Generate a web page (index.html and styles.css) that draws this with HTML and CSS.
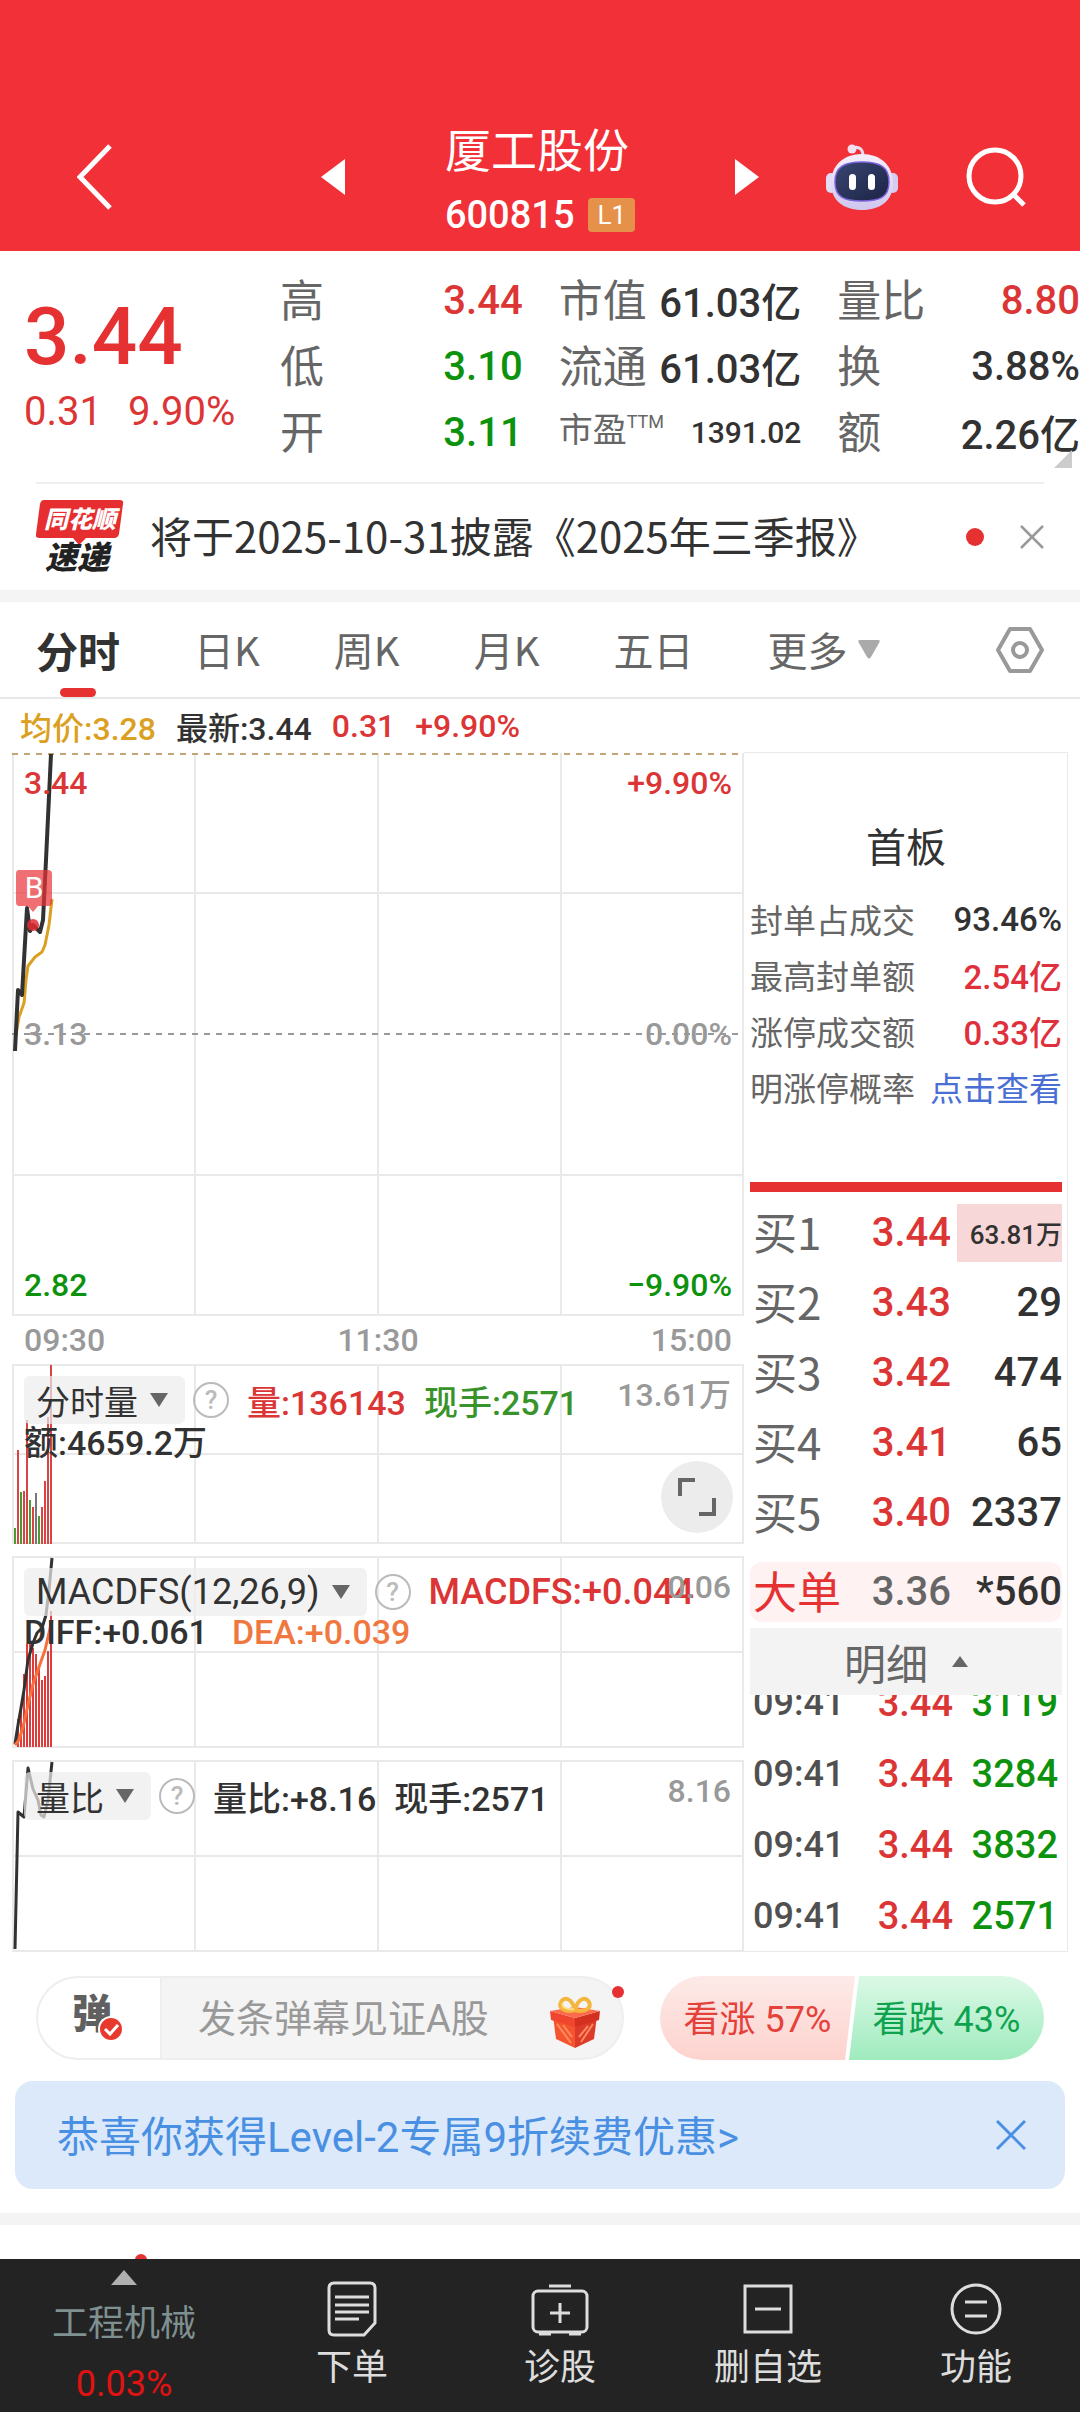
FILE: index.html
```html
<!DOCTYPE html>
<html lang="zh-CN">
<head>
<meta charset="utf-8">
<meta name="viewport" content="width=device-width, initial-scale=1">
<title>厦工股份 600815</title>
<link rel="stylesheet" href="styles.css">
</head>
<body>
<div class="page">

  <header class="topbar">
    <button class="icon-btn back" aria-label="返回">
      <svg width="36" height="66" viewBox="0 0 36 66"><path d="M33 2 3 33l30 31" fill="none" stroke="#fff" stroke-width="5"/></svg>
    </button>
    <div class="switcher">
      <button class="icon-btn" aria-label="上一只"><svg width="24" height="36" viewBox="0 0 24 36"><path d="M24 0v36L0 18z" fill="#fff"/></svg></button>
      <div class="stock">
        <h1 class="stock-name">厦工股份</h1>
        <p class="stock-code">600815 <span class="level">L1</span></p>
      </div>
      <button class="icon-btn" aria-label="下一只"><svg width="24" height="36" viewBox="0 0 24 36"><path d="M0 0v36l24-18z" fill="#fff"/></svg></button>
    </div>
    <div class="top-actions">
      <button class="icon-btn" aria-label="智能助手">
        <svg width="72" height="68" viewBox="0 0 72 68">
          <defs>
            <linearGradient id="shell" x1="0" y1="0" x2="0" y2="1"><stop offset="0" stop-color="#f6f0fb"/><stop offset="1" stop-color="#cfc6ee"/></linearGradient>
            <linearGradient id="visor" x1="0" y1="0" x2="1" y2="1"><stop offset="0" stop-color="#3a4672"/><stop offset="1" stop-color="#1b2344"/></linearGradient>
          </defs>
          <path d="M27 5c6-2 10 1 10 8" fill="none" stroke="#eadcf2" stroke-width="3"/>
          <circle cx="26" cy="6" r="4.500" fill="#f3dff0"/>
          <rect x="0" y="30" width="10" height="20" rx="5" fill="#e2dcf4"/>
          <rect x="62" y="30" width="10" height="20" rx="5" fill="#d5cdf0"/>
          <path d="M36 11C54 11 67 22 67 40S54 67 36 67 5 58 5 40 18 11 36 11z" fill="url(#shell)"/>
          <path d="M36 19C54 19 63 24 63 39S54 58 36 58 9 54 9 39 18 19 36 19z" fill="url(#visor)" stroke="#7a62d8" stroke-width="1.500"/>
          <rect x="23" y="31" width="7" height="16" rx="3.500" fill="#fff"/>
          <rect x="42" y="31" width="7" height="16" rx="3.500" fill="#fff"/>
        </svg>
      </button>
      <button class="icon-btn" aria-label="搜索">
        <svg width="60" height="60" viewBox="0 0 60 60"><circle cx="29" cy="29" r="26" fill="none" stroke="#fff" stroke-width="5"/><path d="m47 47 11 11" stroke="#fff" stroke-width="5"/></svg>
      </button>
    </div>
  </header>

  <section class="quote">
    <div class="price-box">
      <div class="price">3.44</div>
      <div class="change"><span>0.31</span><span>9.90%</span></div>
    </div>
    <div class="stats">
      <dl class="stat-col">
        <div><dt>高</dt><dd class="up">3.44</dd></div>
        <div><dt>低</dt><dd class="down">3.10</dd></div>
        <div><dt>开</dt><dd class="down">3.11</dd></div>
      </dl>
      <dl class="stat-col">
        <div><dt>市值</dt><dd>61.03亿</dd></div>
        <div><dt>流通</dt><dd>61.03亿</dd></div>
        <div class="small"><dt>市盈<span class="ttm">TTM</span></dt><dd>1391.02</dd></div>
      </dl>
      <dl class="stat-col">
        <div><dt>量比</dt><dd class="up">8.80</dd></div>
        <div><dt>换</dt><dd>3.88%</dd></div>
        <div><dt>额</dt><dd>2.26亿</dd></div>
      </dl>
    </div>
    <svg class="corner" width="18" height="18" viewBox="0 0 18 18"><path d="M18 0v18H0z" fill="#ccc"/></svg>
  </section>

  <section class="news">
    <svg class="news-logo" width="88" height="76" viewBox="0 0 88 76">
      <path d="M8 1h76q4 0 3 4l-4 30q-1 4-5 4H50l-7 7-6-7H3q-4 0-3-4L4 5q1-4 4-4z" fill="#e62e30"/>
      <text x="44" y="29" class="logo-top">同花顺</text>
      <text x="41" y="70" class="logo-bottom">速递</text>
    </svg>
    <a class="news-text" href="#news">将于2025-10-31披露《2025年三季报》</a>
    <span class="dot"></span>
    <button class="icon-btn" aria-label="关闭"><svg width="24" height="24" viewBox="0 0 24 24"><path d="m1 1 22 22M23 1 1 23" stroke="#999" stroke-width="2.500"/></svg></button>
  </section>

  <div class="band"></div>

  <nav class="tabs">
    <button class="tab active">分时</button>
    <button class="tab">日K</button>
    <button class="tab">周K</button>
    <button class="tab">月K</button>
    <button class="tab">五日</button>
    <button class="tab more">更多<svg width="22" height="19" viewBox="0 0 22 19"><path d="M2 0h18q3 0 1 3l-8 14q-2 3-4 0L1 3Q-1 0 2 0z" fill="#aaa"/></svg></button>
    <button class="icon-btn settings" aria-label="设置">
      <svg width="48" height="46" viewBox="0 0 48 46" fill="none" stroke="#999" stroke-width="4" stroke-linejoin="round"><path d="M14 2h20l12 21-12 21H14L2 23z"/><circle cx="24" cy="23" r="7"/></svg>
    </button>
  </nav>

  <div class="legend">
    <span class="avg">均价:3.28</span><span>最新:3.44</span><span class="up">0.31</span><span class="up">+9.90%</span>
  </div>

  <main class="board">
    <div class="charts">
      <div class="plot main-plot">
        <svg class="canvas" viewBox="12 752 732 564" preserveAspectRatio="none">
          <g class="grid">
            <path d="M13 753v562M195 753v562M378 753v562M561 753v562M743 753v562"/>
            <path d="M12 893h732M12 1175h732M12 1315h732"/>
          </g>
          <path d="M12 754h732" class="limit"/>
          <path d="M12 1034h732" class="base"/>
          <path d="M16 1035 19 1017 24 1003 26 980 28 966 35 957 42 952 45 945 49 925 52 899" class="line avg-line"/>
          <path d="M15 1051 18 990 22 995 27 908 30 931 33 925 40 932 43 920 46 860 51 754" class="line price-line"/>
        </svg>
        <div class="scale">
          <div><span class="up">3.44</span><span class="up">+9.90%</span></div>
          <div><span>3.13</span><span>0.00%</span></div>
          <div><span class="down">2.82</span><span class="down">−9.90%</span></div>
        </div>
        <div class="mark-layer">
          <svg width="38" height="62" viewBox="0 0 38 62"><path d="M4 0h29q4 0 4 4v28q0 4-4 4H23l-5 6-5-6H4q-3 0-3-4V4q0-4 3-4z" fill="#e83236" fill-opacity=".7"/><circle cx="18" cy="55" r="6" fill="#e02b30" fill-opacity=".85"/><text x="19" y="28" class="mark">B</text></svg>
        </div>
      </div>
      <div class="times"><span>09:30</span><span>11:30</span><span>15:00</span></div>

      <div class="plot vol-plot">
        <svg class="canvas" viewBox="12 1364 732 180" preserveAspectRatio="none">
          <g class="grid">
            <path d="M13 1364v180M195 1364v180M378 1364v180M561 1364v180M743 1364v180"/>
            <path d="M12 1365h732M12 1454h732M12 1543h732"/>
          </g>
          <g class="bars">
            <path stroke="#d94545" d="M18 1544v-94M24 1544v-53M27 1544v-124M33 1544v-37M42 1544v-37M45 1544v-63M48 1544v-127M51 1544v-179"/>
            <path stroke="#4a9a35" d="M15 1544v-16M21 1544v-52M30 1544v-44M39 1544v-28"/>
            <path stroke="#777" d="M36 1544v-51"/>
          </g>
        </svg>
        <div class="info">
          <div class="info-row">
            <button class="picker">分时量<svg width="18" height="14" viewBox="0 0 18 14"><path d="M0 0h18L9 14z" fill="#666"/></svg></button>
            <button class="help" aria-label="说明">?</button>
            <span class="up">量:136143</span><span class="hand">现手:2571</span>
          </div>
          <div class="info-row second"><span>额:4659.2万</span></div>
        </div>
        <span class="max">13.61万</span>
        <button class="expand" aria-label="全屏"><svg width="38" height="38" viewBox="0 0 38 38" fill="none" stroke="#666" stroke-width="4"><path d="M2 18V2h15M36 20v16H21"/></svg></button>
      </div>

      <div class="plot sub-plot">
        <svg class="canvas" viewBox="12 1556 732 192" preserveAspectRatio="none">
          <g class="grid">
            <path d="M13 1556v191M195 1556v191M378 1556v191M561 1556v191M743 1556v191"/>
            <path d="M12 1557h732M12 1652h732M12 1747h732"/>
          </g>
          <g class="bars">
            <path stroke="#dc3c3c" d="M18 1747v-28M21 1747v-40M24 1747v-73M27 1747v-103M30 1747v-103M33 1747v-99M36 1747v-93M39 1747v-81M42 1747v-67M45 1747v-71M48 1747v-96M51 1747v-136"/>
          </g>
          <path d="M15 1744 18 1725 21 1708 24 1690 28 1660 33 1643 37 1633 42 1628 46 1615 49 1590 52 1558" class="line thin"/>
          <path d="M15 1745 19 1740 23 1727 28 1705 33 1684 39 1667 45 1650 52 1620" class="line dea-line"/>
        </svg>
        <div class="info">
          <div class="info-row wide">
            <button class="picker">MACDFS(12,26,9)<svg width="18" height="14" viewBox="0 0 18 14"><path d="M0 0h18L9 14z" fill="#666"/></svg></button>
            <button class="help" aria-label="说明">?</button>
            <span class="up">MACDFS:+0.044</span>
          </div>
          <div class="info-row second"><span>DIFF:+0.061</span><span class="dea">DEA:+0.039</span></div>
        </div>
        <span class="max">0.06</span>
      </div>

      <div class="plot sub-plot">
        <svg class="canvas" viewBox="12 1760 732 192" preserveAspectRatio="none">
          <g class="grid">
            <path d="M13 1760v191M195 1760v191M378 1760v191M561 1760v191M743 1760v191"/>
            <path d="M12 1761h732M12 1856h732M12 1951h732"/>
          </g>
          <path d="M15 1949 18 1812 24 1817 28 1768 33 1789 38 1800 41 1815 44 1817 48 1800 52 1762" class="line thin"/>
        </svg>
        <div class="info">
          <div class="info-row">
            <button class="picker">量比<svg width="18" height="14" viewBox="0 0 18 14"><path d="M0 0h18L9 14z" fill="#666"/></svg></button>
            <button class="help" aria-label="说明">?</button>
            <span>量比:+8.16</span><span>现手:2571</span>
          </div>
        </div>
        <span class="max">8.16</span>
      </div>
    </div>

    <aside class="side">
      <h2 class="side-title">首板</h2>
      <dl class="limit-list">
        <div><dt>封单占成交</dt><dd>93.46%</dd></div>
        <div><dt>最高封单额</dt><dd class="hot">2.54亿</dd></div>
        <div><dt>涨停成交额</dt><dd class="hot">0.33亿</dd></div>
        <div><dt>明涨停概率</dt><dd><a href="#rate">点击查看</a></dd></div>
      </dl>
      <div class="ratio-bar"></div>
      <table class="book">
        <tbody>
          <tr><th scope="row">买1</th><td class="up">3.44</td><td class="amount"><span class="big">63.81万</span></td></tr>
          <tr><th scope="row">买2</th><td class="up">3.43</td><td class="amount">29</td></tr>
          <tr><th scope="row">买3</th><td class="up">3.42</td><td class="amount">474</td></tr>
          <tr><th scope="row">买4</th><td class="up">3.41</td><td class="amount">65</td></tr>
          <tr><th scope="row">买5</th><td class="up">3.40</td><td class="amount">2337</td></tr>
        </tbody>
      </table>
      <table class="book large-order">
        <tbody><tr><th scope="row">大单</th><td>3.36</td><td class="amount">*560</td></tr></tbody>
      </table>
      <button class="detail">明细<svg width="16" height="11" viewBox="0 0 16 11"><path d="M8 0l8 11H0z" fill="#666"/></svg></button>
      <div class="trades-view">
        <table class="trades">
          <tbody>
            <tr><td>09:41</td><td class="up">3.44</td><td class="down">3119</td></tr>
            <tr><td>09:41</td><td class="up">3.44</td><td class="down">3284</td></tr>
            <tr><td>09:41</td><td class="up">3.44</td><td class="down">3832</td></tr>
            <tr><td>09:41</td><td class="up">3.44</td><td class="down">2571</td></tr>
          </tbody>
        </table>
      </div>
    </aside>
  </main>

  <section class="chat">
    <div class="composer">
      <button class="danmu" aria-label="弹幕开关">
        <span class="danmu-char">弹</span>
        <svg class="danmu-check" width="26" height="26" viewBox="0 0 26 26"><circle cx="13" cy="13" r="12" fill="#e8392f" stroke="#fff" stroke-width="2"/><path d="m7 13 5 5 8-9" fill="none" stroke="#fff" stroke-width="3"/></svg>
      </button>
      <input class="composer-input" type="text" aria-label="弹幕" placeholder="发条弹幕见证A股">
      <button class="icon-btn gift" aria-label="礼物">
        <svg width="50" height="52" viewBox="0 0 50 52">
          <path d="M3 20l22 8v24L6 43z" fill="#f4552f"/><path d="M47 20l-22 8v24l19-9z" fill="#dc3a2a"/>
          <path d="M0 15l25 7v9L1 24z" fill="#f0452f"/><path d="M50 15l-25 7v9l24-7z" fill="#d3301f"/><path d="M0 15l25-4 25 4-25 7z" fill="#fb6a4c"/>
          <path d="m7 28 14 19M13 29l9 12M43 28 31 46M38 30l-9 11" stroke="#ff8a5c" stroke-width="2"/>
          <path d="M25 14C15 17 8 12 11 6s11-4 14 8c3-12 11-14 14-8s-4 11-14 8z" fill="none" stroke="#f4b63c" stroke-width="4"/>
          <path d="M24 13C17 14 11 11 13 7" fill="none" stroke="#ffe08a" stroke-width="2"/>
        </svg>
      </button>
      <span class="dot badge"></span>
    </div>
    <div class="vote">
      <button class="vote-up">看涨 57%</button>
      <button class="vote-down">看跌 43%</button>
    </div>
  </section>

  <div class="promo">
    <a href="#level2">恭喜你获得Level-2专属9折续费优惠&gt;</a>
    <button class="icon-btn" aria-label="关闭"><svg width="30" height="30" viewBox="0 0 30 30"><path d="m1 1 28 28M29 1 1 29" stroke="#4a90e2" stroke-width="3"/></svg></button>
  </div>

  <div class="band"></div>
  <div class="next"><span class="dot next-dot"></span></div>

  <nav class="bottom">
    <button class="sector">
      <svg width="26" height="15" viewBox="0 0 26 15"><path d="M13 0l13 15H0z" fill="#b0b0b0"/></svg>
      <span class="sector-name">工程机械</span>
      <span class="sector-rate">0.03%</span>
    </button>
    <button class="item">
      <svg width="52" height="56" viewBox="0 0 52 56" fill="none" stroke="#ddd" stroke-width="3"><path d="M8 2h36q5 0 5 5v35L38 54H8q-5 0-5-5V7q0-5 5-5z"/><path d="M9 16h34M9 24h34M9 31h34M9 38h24"/></svg>
      下单
    </button>
    <button class="item">
      <svg width="58" height="56" viewBox="0 0 58 56" fill="none" stroke="#ddd" stroke-width="3"><path d="M18 5h22"/><rect x="2" y="10" width="54" height="41" rx="5"/><path d="M19 32h20M29 22v20M8 53h12M38 53h12"/></svg>
      诊股
    </button>
    <button class="item">
      <svg width="50" height="56" viewBox="0 0 50 56" fill="none" stroke="#ddd" stroke-width="3"><path d="M2 5h46v46H2zM12 28h26"/></svg>
      删自选
    </button>
    <button class="item">
      <svg width="52" height="56" viewBox="0 0 52 56" fill="none" stroke="#ddd" stroke-width="3"><circle cx="26" cy="28" r="24"/><path d="M15 21h22M15 35h22"/></svg>
      功能
    </button>
  </nav>
</div>
</body>
</html>
```
FILE: styles.css
```css
* { box-sizing: border-box; }

body, h1, h2, p, dl, dd { margin: 0; }

body {
  background: #fff;
  color: #323232;
  font-family: Roboto, "Noto Sans CJK SC", sans-serif;
  font-size: 40px;
}

button {
  margin: 0;
  padding: 0;
  border: 0;
  background: none;
  color: inherit;
  font: inherit;
}

a { color: inherit; text-decoration: none; }
svg { display: block; flex: none; }
table { border-collapse: collapse; table-layout: fixed; width: 100%; }
th, td { padding: 0; }

.page {
  display: flex;
  flex-direction: column;
  min-height: 100vh;
}

.icon-btn { display: block; flex: none; }
.up { color: #dc3535; }
.down { color: #0d920d; }
.dot {
  width: 18px;
  height: 18px;
  border-radius: 50%;
  background: #e53131;
}
.band { height: 12px; background: #f4f4f4; }

/* Header */
.topbar {
  display: grid;
  grid-template-columns: 1fr 438px 1fr;
  align-items: center;
  padding: 113px 0 10px;
  background: #f23037;
  color: #fff;
}
.back { margin-left: 77px; justify-self: start; }
.switcher {
  display: flex;
  align-items: center;
  justify-content: space-between;
}
.stock {
  display: flex;
  flex-direction: column;
  gap: 10px;
  padding-top: 10px;
}
.stock-name {
  font-size: 46px;
  font-weight: 400;
  line-height: 56px;
}
.stock-code {
  display: flex;
  align-items: center;
  gap: 14px;
  font-size: 38px;
  font-weight: 500;
  line-height: 52px;
}
.level {
  padding: 0 9px;
  border-radius: 4px;
  background: #e5914a;
  font-size: 26px;
  font-weight: 400;
  line-height: 34px;
}
.top-actions {
  display: flex;
  align-items: center;
  justify-content: flex-end;
  gap: 68px;
  padding-right: 54px;
}

/* Quote summary */
.quote {
  position: relative;
  display: flex;
  padding: 16px 0 17px 24px;
}
.price-box { width: 256px; padding-top: 28px; }
.price {
  color: #e53131;
  font-size: 80px;
  font-weight: 500;
  line-height: 84px;
}
.change {
  display: flex;
  gap: 26px;
  padding-top: 9px;
  color: #dc3535;
  line-height: 48px;
}
.stats {
  display: grid;
  flex: 1;
  grid-template-columns: repeat(3, 1fr);
  gap: 36px;
}
.stat-col div {
  display: flex;
  align-items: center;
  justify-content: space-between;
  height: 66px;
  white-space: nowrap;
}
.stat-col dt { padding-bottom: 4px; color: #666; font-size: 44px; }
.stat-col dd { font-weight: 500; }
.stat-col .small dt { display: flex; font-size: 34px; line-height: 40px; }
.stat-col .small dd { font-size: 30px; }
.ttm { font-size: 18px; line-height: 24px; }
.corner { position: absolute; right: 8px; bottom: 14px; }

/* News strip */
.news {
  display: flex;
  align-items: center;
  height: 108px;
  margin: 0 36px;
  border-top: 2px solid #eee;
}
.news-logo { margin-right: 26px; }
.logo-top, .logo-bottom { font-style: italic; font-weight: 900; text-anchor: middle; }
.logo-top { fill: #fff; font-size: 24px; }
.logo-bottom { fill: #222; font-size: 32px; }
.news-text {
  flex: 1;
  padding-bottom: 4px;
  font-family: "Noto Sans CJK SC", sans-serif;
  font-size: 42px;
  line-height: 56px;
  white-space: nowrap;
}
.news .dot { margin-right: 36px; }

/* Period tabs */
.tabs {
  display: flex;
  align-items: center;
  gap: 74px;
  height: 97px;
  padding: 0 36px;
  border-bottom: 2px solid #e8e8e8;
}
.tab {
  position: relative;
  height: 95px;
  color: #666;
  font-family: "Noto Sans CJK SC", sans-serif;
  line-height: 95px;
  white-space: nowrap;
}
.tab.active { color: #323232; font-size: 42px; font-weight: 700; }
.tab.active::after {
  position: absolute;
  bottom: 0;
  left: 50%;
  width: 36px;
  height: 9px;
  margin-left: -18px;
  border-radius: 5px;
  background: #e53131;
  content: "";
}
.more { display: flex; align-items: center; gap: 10px; }
.settings { margin-left: auto; }

.legend {
  display: flex;
  align-items: center;
  gap: 20px;
  height: 53px;
  padding-left: 20px;
  font-size: 32px;
  font-weight: 500;
}
.legend .avg { color: #dba021; }

/* Charts and order book */
.board {
  display: grid;
  grid-template-columns: 1fr 324px;
  margin: 0 12px;
}
.charts { display: flex; flex-direction: column; min-width: 0; }
.plot {
  display: grid;
  grid-template-columns: 100%;
  grid-template-rows: 100%;
}
.plot > * { grid-area: 1 / 1; }
.main-plot { height: 564px; }
.vol-plot { height: 180px; margin-bottom: 12px; }
.sub-plot { height: 192px; }
.sub-plot + .sub-plot { margin-top: 12px; }
.canvas { width: 100%; height: 100%; fill: none; }
.grid { stroke: #e9e9e9; stroke-width: 2; }
.limit { stroke: #c4a578; stroke-width: 2; stroke-dasharray: 6 6; }
.base { stroke: #999; stroke-width: 2; stroke-dasharray: 6 6; }
.line { stroke: #323232; stroke-width: 4; stroke-linejoin: round; }
.line.thin { stroke-width: 3; }
.line.avg-line { stroke: #dba021; stroke-width: 3; }
.line.dea-line { stroke: #f7703c; stroke-width: 3; }
.bars { stroke-width: 2; }

.scale {
  display: flex;
  flex-direction: column;
  justify-content: space-between;
  padding: 13px 12px;
  color: #999;
  font-size: 32px;
  font-weight: 500;
  line-height: 36px;
}
.scale div { display: flex; justify-content: space-between; }
.mark-layer { padding: 118px 0 0 3px; }
.mark { fill: #fff; font-size: 30px; text-anchor: middle; }
.times {
  display: flex;
  justify-content: space-between;
  padding: 0 12px;
  color: #999;
  font-size: 32px;
  font-weight: 500;
  line-height: 48px;
}

.info {
  padding: 12px 0 0 12px;
  font-size: 34px;
  font-weight: 500;
  white-space: nowrap;
}
.info-row { display: flex; align-items: center; gap: 18px; height: 48px; }
.info-row.wide { font-size: 36px; }
.info-row.second { height: 32px; gap: 24px; }
.picker {
  display: flex;
  align-items: center;
  gap: 12px;
  height: 48px;
  margin-right: -10px;
  padding: 0 17px 0 12px;
  border-radius: 6px;
  background: rgba(236, 236, 236, .7);
  font-weight: 400;
}
.help {
  width: 36px;
  height: 36px;
  border: 2px solid #bbb;
  border-radius: 50%;
  color: #bbb;
  font-size: 26px;
  line-height: 32px;
}
.hand { color: #38942a; }
.dea { color: #f07840; }
.max {
  align-self: start;
  justify-self: end;
  padding: 13px 13px 0 0;
  color: #999;
  font-size: 32px;
  font-weight: 500;
  line-height: 36px;
}
.expand {
  display: grid;
  place-items: center;
  align-self: end;
  justify-self: end;
  width: 72px;
  height: 72px;
  margin: 0 11px 11px 0;
  border-radius: 50%;
  background: #ececec;
}

.side {
  display: flex;
  flex-direction: column;
  height: 1200px;
  padding: 66px 5px 0 6px;
  border: 1px solid #eaeaea;
  border-left: 0;
}
.side-title {
  font-size: 40px;
  font-weight: 400;
  line-height: 60px;
  text-align: center;
}
.limit-list { padding: 12px 0 67px; font-size: 33px; }
.limit-list div {
  display: flex;
  align-items: center;
  justify-content: space-between;
  height: 56px;
  white-space: nowrap;
}
.limit-list dt { color: #666; }
.limit-list dd { font-weight: 500; }
.limit-list a { color: #4a6fd4; font-weight: 400; }
.hot { color: #e0303c; }
.ratio-bar { height: 10px; margin-bottom: 6px; background: #e53131; }

.book tr { height: 70px; }
.book th {
  width: 110px;
  padding: 0 0 5px 3px;
  color: #666;
  font-family: "Noto Sans CJK SC", sans-serif;
  font-size: 44px;
  font-weight: 400;
  line-height: 54px;
  text-align: left;
}
.book td {
  width: 91px;
  font-weight: 500;
  line-height: 58px;
  text-align: right;
}
.book .amount { width: auto; }
.big {
  display: block;
  margin-left: 6px;
  padding-top: 4px;
  background: #f8d7d8;
  font-size: 26px;
  line-height: 54px;
}
.large-order { margin: 14px 0 6px; border-radius: 12px; background: #fef2f2; }
.large-order tr { height: 60px; }
.large-order th { color: #e53131; }
.large-order td { color: #666; }
.large-order .amount { color: #323232; }
.detail {
  display: flex;
  align-items: center;
  justify-content: center;
  gap: 24px;
  height: 67px;
  flex: none;
  background: #f3f3f3;
  color: #666;
  font-size: 42px;
}
.trades-view {
  display: flex;
  flex: 1;
  flex-direction: column;
  justify-content: flex-end;
  min-height: 0;
  overflow: hidden;
}
.trades { flex: none; font-size: 38px; font-weight: 500; }
.trades tr { height: 71px; }
.trades td { width: 103px; text-align: right; }
.trades td:first-child {
  width: 100px;
  padding-left: 3px;
  color: #505050;
  font-size: 36px;
  text-align: left;
}
.trades td:last-child { width: auto; padding-right: 4px; }

/* Comment bar */
.chat {
  display: flex;
  gap: 36px;
  padding: 24px 36px 21px;
}
.composer {
  position: relative;
  display: flex;
  align-items: center;
  flex: 1;
  height: 84px;
  min-width: 0;
  padding-right: 22px;
  border: 2px solid #eee;
  border-radius: 42px;
  background: #f4f4f4;
}
.danmu {
  position: relative;
  width: 124px;
  height: 80px;
  flex: none;
  border-right: 2px solid #eee;
  border-radius: 40px 0 0 40px;
  background: #fff;
}
.danmu-char {
  display: block;
  padding: 0 14px 6px 0;
  color: #606060;
  font-weight: 900;
  line-height: 72px;
}
.danmu-check { position: absolute; top: 38px; left: 60px; }
.composer-input {
  flex: 1;
  min-width: 0;
  padding: 2px 0 0 36px;
  border: 0;
  outline: 0;
  background: none;
  color: #323232;
  font: inherit;
  font-size: 38px;
}
.composer-input::placeholder { color: #999; opacity: 1; }
.gift { padding-top: 8px; }
.badge { position: absolute; top: 8px; right: -2px; width: 12px; height: 12px; }
.vote {
  display: flex;
  width: 384px;
  border-radius: 42px;
  overflow: hidden;
  font-size: 36px;
}
.vote button { flex: 1; padding-bottom: 4px; white-space: nowrap; }
.vote-up {
  clip-path: polygon(0 0, 100% 0, calc(100% - 10px) 100%, 0 100%);
  background: linear-gradient(#fdeae8, #fdd3ce);
  color: #e5413b;
}
.vote .vote-down {
  margin-left: -6px;
  clip-path: polygon(10px 0, 100% 0, 100% 100%, 0 100%);
  background: linear-gradient(#dbf9e6, #9febbe);
  color: #0fa350;
}

.promo {
  display: flex;
  align-items: center;
  justify-content: space-between;
  height: 108px;
  margin: 0 15px 24px;
  padding: 0 39px 0 42px;
  border-radius: 18px;
  background: #dbe9fb;
  color: #4a90e2;
  font-size: 42px;
}
.promo a { padding-bottom: 4px; }
.next { flex: 1 0 34px; position: relative; overflow: hidden; }
.next-dot { position: absolute; bottom: -7px; left: 135px; width: 12px; height: 12px; }

/* Bottom navigation */
.bottom {
  display: flex;
  height: 153px;
  flex: none;
  background: #232323;
  color: #ddd;
  font-size: 36px;
}
.bottom button {
  display: flex;
  flex-direction: column;
  align-items: center;
}
.sector { width: 248px; padding-top: 11px; }
.sector-name { padding-top: 12px; color: #7f9090; line-height: 54px; }
.sector-rate { padding-top: 6px; color: #e01212; line-height: 54px; }
.item { flex: 1; gap: 4px; padding-top: 22px; line-height: 54px; }
```
